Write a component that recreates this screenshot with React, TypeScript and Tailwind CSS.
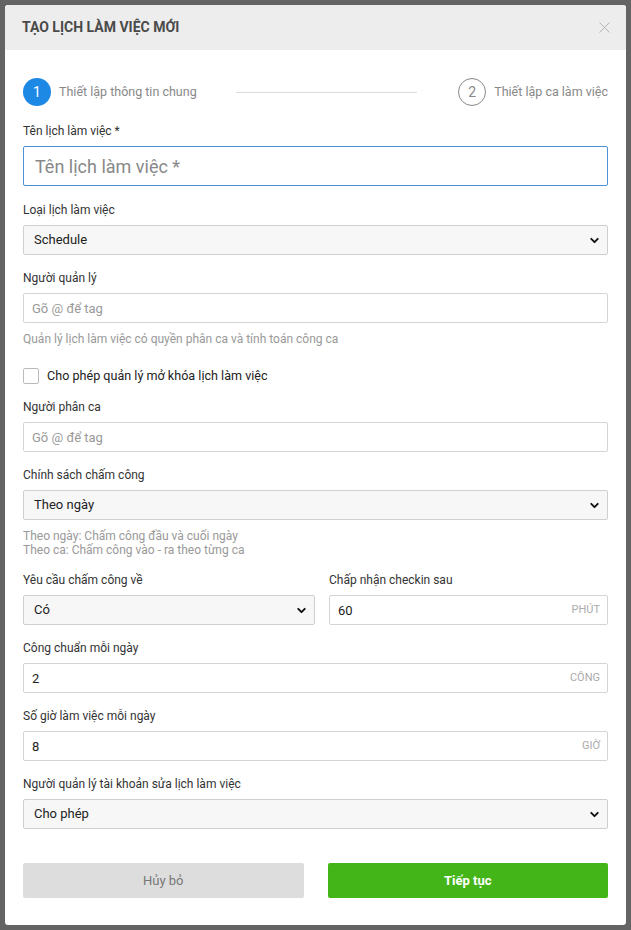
import { ChevronDown, X } from 'lucide-react';

const font = { fontFamily: 'Roboto, "Noto Sans", sans-serif' };

function Label({ children }: { children: React.ReactNode }) {
  return <div className="mb-[7px] text-[12px] leading-4 text-[#333]">{children}</div>;
}

function Select({ value }: { value: string }) {
  return (
    <div className="relative">
      <select
        defaultValue={value}
        className="h-[30px] w-full appearance-none rounded-[2px] border border-[#cfcfcf] bg-[#f7f7f7] px-[10px] text-[13px] text-[#222] outline-none"
      >
        <option>{value}</option>
      </select>
      <ChevronDown
        size={13}
        strokeWidth={3.5}
        className="pointer-events-none absolute right-[7px] top-[9px] text-[#111]"
      />
    </div>
  );
}

function Input({ placeholder, value, suffix }: { placeholder?: string; value?: string; suffix?: string }) {
  return (
    <div className="relative">
      <input
        placeholder={placeholder}
        defaultValue={value}
        className="h-[30px] w-full rounded-[2px] border border-[#d4d4d4] bg-white px-[8px] text-[13px] text-[#222] outline-none placeholder:text-[#999]"
      />
      {suffix && (
        <span className="pointer-events-none absolute right-[8px] top-[8px] text-[11px] leading-[14px] text-[#aaa]">
          {suffix}
        </span>
      )}
    </div>
  );
}

export default function App() {
  return (
    <div className="h-[930px] w-full bg-[#646464] px-[5px] py-[5px]" style={font}>
      <div className="flex h-full flex-col overflow-hidden rounded-[3px] bg-white">
        {/* Header */}
        <div className="flex h-[45px] shrink-0 items-center justify-between bg-[#ededed] pl-[17px] pr-[12px]">
          <h2 className="text-[14px] font-bold text-[#4a4a4a]">TẠO LỊCH LÀM VIỆC MỚI</h2>
          <X size={19} strokeWidth={1.2} className="text-[#b0b0b0]" />
        </div>

        <div className="flex flex-1 flex-col px-[18px] pt-[28px]">
          {/* Stepper */}
          <div className="flex h-[28px] items-center">
            <div className="flex h-[28px] w-[28px] items-center justify-center rounded-full bg-[#1e88e5] text-[14px] text-white">
              1
            </div>
            <span className="ml-[8px] text-[12.5px] text-[#888]">Thiết lập thông tin chung</span>
            <div className="ml-[39px] mr-[41px] h-px flex-1 bg-[#dcdcdc]" />
            <div className="flex h-[28px] w-[28px] items-center justify-center rounded-full border border-[#888] text-[14px] text-[#888]">
              2
            </div>
            <span className="ml-[8px] text-[12.5px] text-[#888]">Thiết lập ca làm việc</span>
          </div>

          {/* Form */}
          <div className="mt-[17px]">
            <Label>Tên lịch làm việc *</Label>
            <input
              placeholder="Tên lịch làm việc *"
              className="h-[40px] w-full rounded-[2px] border border-[#4a90d9] px-[11px] text-[18px] text-[#222] outline-none placeholder:text-[#888]"
            />
          </div>

          <div className="mt-[16px]">
            <Label>Loại lịch làm việc</Label>
            <Select value="Schedule" />
          </div>

          <div className="mt-[15px]">
            <Label>Người quản lý</Label>
            <Input placeholder="Gõ @ để tag" />
            <p className="mt-[8px] text-[12px] leading-4 text-[#999]">
              Quản lý lịch làm việc có quyền phân ca và tính toán công ca
            </p>
          </div>

          <label className="mt-[19px] flex h-[20px] items-center gap-[8px]">
            <span className="h-[16px] w-[16px] rounded-[2px] border border-[#bbb] bg-white" />
            <span className="text-[12.6px] text-[#222]">Cho phép quản lý mở khóa lịch làm việc</span>
          </label>

          <div className="mt-[13px]">
            <Label>Người phân ca</Label>
            <Input placeholder="Gõ @ để tag" />
          </div>

          <div className="mt-[15px]">
            <Label>Chính sách chấm công</Label>
            <Select value="Theo ngày" />
            <div className="mt-[9px] text-[12px] leading-[14px] text-[#999]">
              <p>Theo ngày: Chấm công đầu và cuối ngày</p>
              <p>Theo ca: Chấm công vào - ra theo từng ca</p>
            </div>
          </div>

          <div className="mt-[15px] grid grid-cols-[292fr_279fr] gap-[14px]">
            <div>
              <Label>Yêu cầu chấm công về</Label>
              <Select value="Có" />
            </div>
            <div>
              <Label>Chấp nhận checkin sau</Label>
              <Input value="60" suffix="PHÚT" />
            </div>
          </div>

          <div className="mt-[15px]">
            <Label>Công chuẩn mỗi ngày</Label>
            <Input value="2" suffix="CÔNG" />
          </div>

          <div className="mt-[15px]">
            <Label>Số giờ làm việc mỗi ngày</Label>
            <Input value="8" suffix="GIỜ" />
          </div>

          <div className="mt-[15px]">
            <Label>Người quản lý tài khoản sửa lịch làm việc</Label>
            <Select value="Cho phép" />
          </div>

          {/* Footer buttons */}
          <div className="mt-[34px] grid grid-cols-2 gap-[24px]">
            <button className="h-[35px] rounded-[2px] bg-[#dddddd] text-[13px] text-[#777]">Hủy bỏ</button>
            <button className="h-[35px] rounded-[2px] bg-[#43b519] text-[13px] font-bold text-white">Tiếp tục</button>
          </div>
        </div>
      </div>
    </div>
  );
}
